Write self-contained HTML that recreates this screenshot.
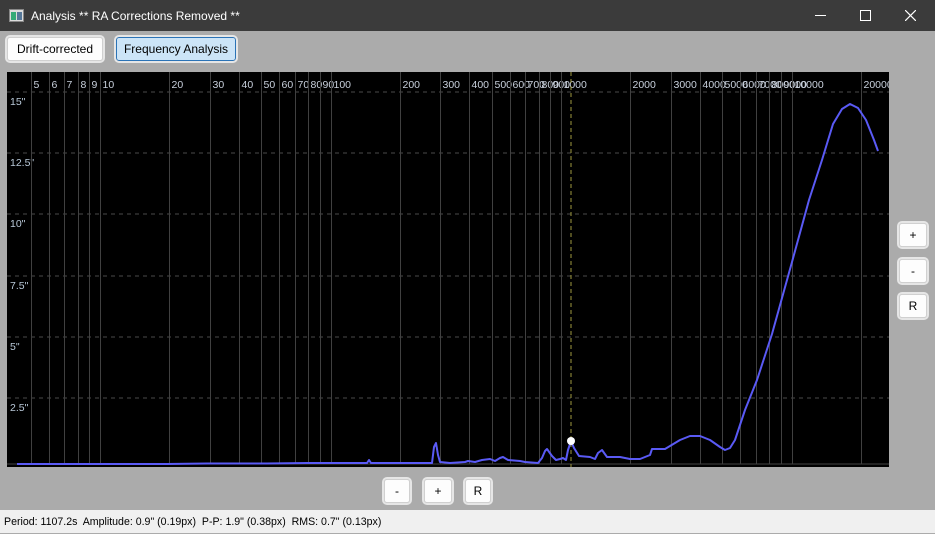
<!DOCTYPE html>
<html><head><meta charset="utf-8"><style>
body{margin:0;width:935px;height:533px;background:#ababab;font-family:"Liberation Sans","DejaVu Sans",sans-serif;position:relative;overflow:hidden}
.title{position:absolute;left:0;top:0;width:935px;height:31px;background:#3b3b3b;color:#fff;font-size:12px}
.btn{position:absolute;background:#fdfdfd;border:1px solid #d0d0d0;border-radius:3px;font-size:12px;color:#000;text-align:center;box-sizing:border-box;outline:2px solid #e6e6e6}
.status{position:absolute;left:0;top:510px;width:935px;height:23px;background:#f0f0f0;font-size:10.6px;line-height:24px;padding-left:4px}
</style></head><body>
<div class="title">
<svg style="position:absolute;left:9px;top:9px" width="15" height="13"><rect x="0.5" y="0.5" width="14" height="12" fill="#ddd" stroke="#888"/><rect x="2" y="3" width="5" height="8" fill="#3a7"/><rect x="8" y="3" width="5" height="8" fill="#579"/></svg>
<span style="position:absolute;left:31px;top:9px">Analysis ** RA Corrections Removed **</span>
<div style="position:absolute;left:815px;top:15px;width:11px;height:1px;background:#fff"></div>
<div style="position:absolute;left:860px;top:10px;width:9px;height:9px;border:1px solid #fff"></div>
<svg style="position:absolute;left:905px;top:10px" width="11" height="11"><path d="M0 0L11 11M11 0L0 11" stroke="#fff" stroke-width="1.2"/></svg>
</div>
<div class="btn" style="left:7px;top:37px;width:96px;height:24px;line-height:22px">Drift-corrected</div>
<div class="btn" style="left:116px;top:37px;width:120px;height:24px;line-height:22px;background:#cce4f7;border-color:#2b73b6">Frequency Analysis</div>
<svg style="position:absolute;left:7px;top:72px" width="882" height="395" id="plot">
<rect width="882" height="395" fill="#000"/>
<g id="g"></g>
<path d="M564 0V395" stroke="#a09a40" stroke-dasharray="4,3" stroke-width="1"/>
<polyline fill="none" stroke="#5a5af5" stroke-width="2" stroke-linejoin="round" points="10,392 100,392 160,392 200,391.5 260,391.5 300,391 360,391 362,388 364,391 400,391 425,391 427,375 429,371 431,383 433,390 443,391 458,390 461,389 468,390 475,388 483,387 488,389 493,386 496,385 501,388 513,389 518,390 531,391 535,386 538,379 540,377 545,384 549,388 553,387 556,386 559,388 561,378 564,369 567,376 572,384 583,385 588,387 591,381 595,378 600,385 613,385 623,387 633,387 643,383 645,377 653,377 658,377 673,368 683,364 693,364 703,368 713,375 718,378 723,376 728,368 738,338 750,308 765,262 785,190 802,128 815,88 826,52 835,37 843,32 851,36 859,48 867,68 871,79"/>
<circle cx="564" cy="369" r="4" fill="#fff"/>
</svg>
<script>
var g=document.getElementById('g'),s='';
var ys=[[20,'15"'],[81,'12.5"'],[142,'10"'],[204,'7.5"'],[265,'5"'],[326,'2.5"']];
ys.forEach(function(y){s+='<path d="M0 '+y[0]+'H882" stroke="#4a4a4a" stroke-dasharray="4,4"/>';s+='<text x="3" y="'+(y[0]+13)+'" fill="#b8c8d8" font-size="10.5" font-family="Liberation Sans">'+y[1]+'</text>';});
s+='<path d="M0 392H882" stroke="#444"/>';
var vals=[5,6,7,8,9,10,20,30,40,50,60,70,80,90,100,200,300,400,500,600,700,800,900,1000,2000,3000,4000,5000,6000,7000,8000,9000,10000,20000];
vals.forEach(function(v){var x=Math.round(93+230.5*(Math.log10(v)-1))+0.5;s+='<path d="M'+x+' 0V392" stroke="#404040"/>';s+='<text x="'+(x+2)+'" y="16" fill="#c8d0dc" font-size="10.5" font-family="Liberation Sans">'+v+'</text>';});
g.innerHTML=s;
</script>
<div class="btn" style="left:899px;top:223px;width:28px;height:24px;line-height:22px">+</div>
<div class="btn" style="left:899px;top:259px;width:28px;height:24px;line-height:22px">-</div>
<div class="btn" style="left:899px;top:294px;width:28px;height:24px;line-height:22px">R</div>
<div class="btn" style="left:384px;top:479px;width:26px;height:24px;line-height:22px">-</div>
<div class="btn" style="left:424px;top:479px;width:28px;height:24px;line-height:22px">+</div>
<div class="btn" style="left:465px;top:479px;width:26px;height:24px;line-height:22px">R</div>
<div class="status">Period: 1107.2s&nbsp; Amplitude: 0.9" (0.19px)&nbsp; P-P: 1.9" (0.38px)&nbsp; RMS: 0.7" (0.13px)</div>
</body></html>
